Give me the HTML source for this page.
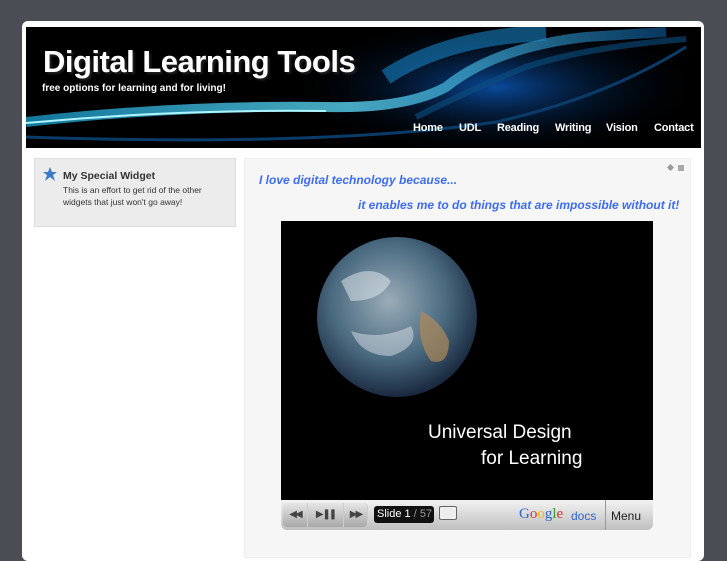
<!DOCTYPE html>
<html><head><style>
*{margin:0;padding:0;box-sizing:border-box}
body{width:727px;height:545px;overflow:hidden;background:#4a4d53;font-family:"Liberation Sans",sans-serif;position:relative}
.wrap{position:absolute;left:22px;top:21px;width:682px;height:540px;background:#fff;border-radius:6px}
.hdr{position:absolute;left:26px;top:27px;width:675px;height:121px;background:#000;overflow:hidden}
.hdr svg{position:absolute;left:0;top:0}
h1{position:absolute;left:43px;top:44px;color:#fff;font-size:31px;font-weight:bold;letter-spacing:-0.5px;text-shadow:2px 2px 2px #222}
.tag{position:absolute;left:42px;top:83px;color:#fff;font-size:10px;font-weight:bold}
.nav{position:absolute;top:122px;color:#fff;font-size:11px;font-weight:bold;letter-spacing:-0.2px}
.side{position:absolute;left:34px;top:158px;width:202px;height:69px;background:#ececec;border:1px solid #ddd}
.side b{position:absolute;left:28px;top:11px;font-size:10.5px;color:#333}
.side p{position:absolute;left:28px;top:25px;font-size:8.5px;color:#333;line-height:12px}
.main{position:absolute;left:244px;top:158px;width:447px;height:400px;background:#f6f6f6;border:1px solid #eee}
.q{position:absolute;color:#3d6cf0;font-style:italic;font-weight:bold;font-size:12px}
.vid{position:absolute;left:281px;top:221px;width:372px;height:279px;background:#000}
.ctl{position:absolute;left:281px;top:500px;width:372px;height:30px;background:linear-gradient(#f2f2f2,#bfbfbf);border-radius:0 0 6px 6px}
.b{position:absolute;top:3px;height:24px;background:linear-gradient(#e6e6e6,#a8a8a8);border-right:1px solid #ccc;color:#444;font-size:10px;line-height:24px;text-align:center;letter-spacing:-2px}
</style></head><body>
<div class="wrap"></div>
<div class="hdr">
<svg width="675" height="121">
<defs>
<radialGradient id="g" cx="0.5" cy="0.5" r="0.5"><stop offset="0" stop-color="#0a4a9a"/><stop offset="1" stop-color="#000" stop-opacity="0"/></radialGradient>
<linearGradient id="c" x1="0" x2="1"><stop offset="0" stop-color="#1aa0d0"/><stop offset="0.5" stop-color="#5ee0ff"/><stop offset="1" stop-color="#0a4a80"/></linearGradient>
</defs>
<ellipse cx="470" cy="60" rx="210" ry="70" fill="url(#g)"/>
<path d="M0 95 Q150 78 300 80 Q380 82 420 60 Q470 20 560 10 L640 5" stroke="url(#c)" stroke-width="10" fill="none" opacity="0.75"/>
<path d="M0 96 Q150 82 300 84" stroke="#aef4ff" stroke-width="2" fill="none"/>
<path d="M360 50 Q420 10 520 6" stroke="#1a8ad0" stroke-width="16" fill="none" opacity="0.55"/>
<path d="M390 90 Q450 60 500 40 Q560 20 660 12" stroke="#0a5080" stroke-width="6" fill="none" opacity="0.6"/>
<path d="M0 110 Q300 120 470 95 Q580 70 660 20" stroke="#0a3c6a" stroke-width="3" fill="none"/>
</svg>
</div>
<h1>Digital Learning Tools</h1>
<div class="tag">free options for learning and for living!</div>
<div class="nav" style="left:413px">Home</div>
<div class="nav" style="left:459px">UDL</div>
<div class="nav" style="left:497px">Reading</div>
<div class="nav" style="left:555px">Writing</div>
<div class="nav" style="left:606px">Vision</div>
<div class="nav" style="left:654px">Contact</div>
<div class="side"><svg style="position:absolute;left:8px;top:8px" width="14" height="14" viewBox="0 0 14 14"><polygon points="7,0 9,5 14,5 10,8 12,14 7,10 2,14 4,8 0,5 5,5" fill="#3a7ac8"/></svg><b>My Special Widget</b><p>This is an effort to get rid of the other<br>widgets that just won't go away!</p></div>
<div class="main"></div>
<div style="position:absolute;left:667px;top:164px;width:7px;height:7px;background:#999;transform:rotate(45deg) scale(.7)"></div>
<div style="position:absolute;left:678px;top:165px;width:6px;height:6px;background:#aaa"></div>
<div class="q" style="left:259px;top:173px">I love digital technology because...</div>
<div class="q" style="left:358px;top:198px">it enables me to do things that are impossible without it!</div>
<div class="vid">
<svg width="372" height="279"><defs><radialGradient id="e" cx="0.45" cy="0.4" r="0.6"><stop offset="0" stop-color="#9aacb8"/><stop offset="0.6" stop-color="#4a6a80"/><stop offset="1" stop-color="#1a2a40"/></radialGradient></defs>
<circle cx="116" cy="96" r="80" fill="url(#e)"/>
<path d="M60 60 q30 -20 50 0 q-10 20 -40 20z" fill="#e8eef2" opacity="0.5"/>
<path d="M70 110 q30 10 60 -5 q10 20 -20 30 q-30 0 -40 -25z" fill="#e8eef2" opacity="0.45"/>
<path d="M140 90 q20 10 28 30 q0 25 -18 20 q-15 -20 -10 -50z" fill="#b08a5a" opacity="0.7"/>
<text x="147" y="217" fill="#fff" font-size="19" font-family="Liberation Sans">Universal Design</text>
<text x="200" y="243" fill="#fff" font-size="19" font-family="Liberation Sans">for Learning</text></svg>
</div>
<div class="ctl">
<div class="b" style="left:2px;width:25px;border-radius:4px 0 0 4px">◀◀</div>
<div class="b" style="left:27px;width:36px">▶ ❚❚</div>
<div class="b" style="left:63px;width:24px;border-radius:0 4px 4px 0">▶▶</div>
<div style="position:absolute;left:93px;top:6px;width:60px;height:17px;background:#111;border-radius:3px;color:#fff;font-size:11px;line-height:17px;padding-left:3px">Slide 1 <span style="color:#999">/ 57</span></div>
<div style="position:absolute;left:158px;top:6px;width:18px;height:14px;background:#eee;border:1px solid #666;border-radius:2px"></div>
<div style="position:absolute;left:238px;top:6px;font-family:'Liberation Serif',serif;font-size:15px"><span style="color:#3366cc">G</span><span style="color:#d33">o</span><span style="color:#eb0">o</span><span style="color:#3366cc">g</span><span style="color:#393">l</span><span style="color:#d33">e</span></div>
<div style="position:absolute;left:290px;top:9px;color:#3366cc;font-size:12px">docs</div>
<div style="position:absolute;left:324px;top:0;width:1px;height:30px;background:#999"></div>
<div style="position:absolute;left:330px;top:9px;color:#222;font-size:12px">Menu</div>
</div>
</body></html>
